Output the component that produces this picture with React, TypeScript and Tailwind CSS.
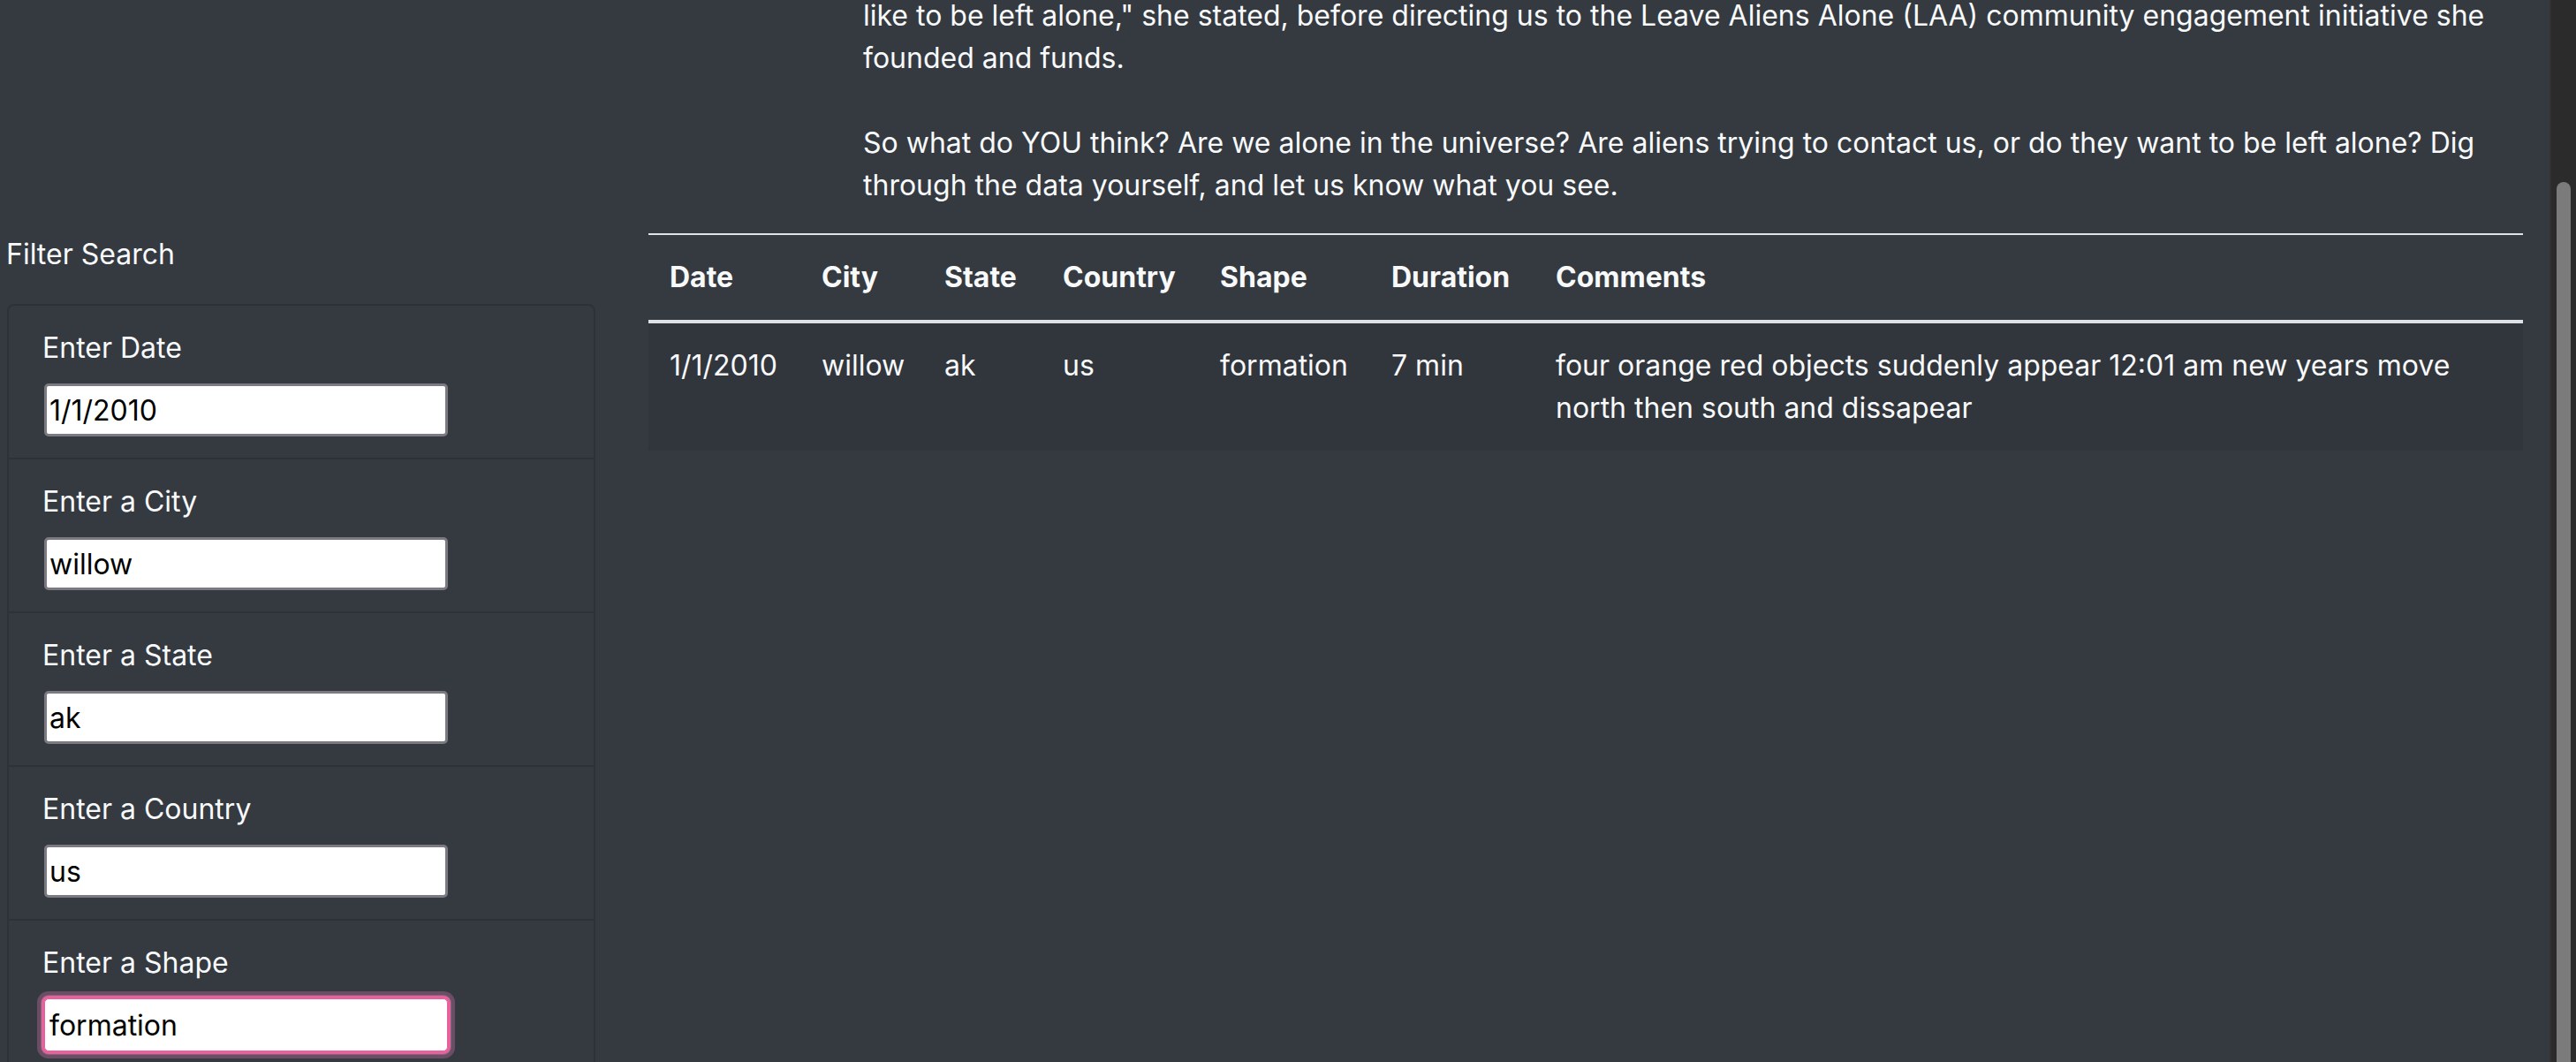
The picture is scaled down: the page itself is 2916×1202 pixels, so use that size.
import React from "react";

const fields = [
  { label: "Enter Date", value: "1/1/2010" },
  { label: "Enter a City", value: "willow" },
  { label: "Enter a State", value: "ak" },
  { label: "Enter a Country", value: "us" },
  { label: "Enter a Shape", value: "formation", focused: true },
];

export default function App() {
  return (
    <div className="flex h-[1202px] w-full overflow-hidden bg-[#343a40] text-[#f8f9fa] font-['Inter','Liberation_Sans',sans-serif] text-[32px] leading-[48px]">
      <div className="flex flex-1 flex-col overflow-hidden">
        {/* intro paragraph (scrolled) */}
        <p className="-mt-[6px] mb-[30px] pl-[977px] pr-[30px] whitespace-nowrap">
          like to be left alone," she stated, before directing us to the Leave Aliens Alone (LAA) community engagement initiative she
          <br />
          founded and funds.
          <br />
          <br />
          So what do YOU think? Are we alone in the universe? Are aliens trying to contact us, or do they want to be left alone? Dig
          <br />
          through the data yourself, and let us know what you see.
        </p>

        <div className="flex">
          {/* filter column */}
          <div className="w-[704px] shrink-0">
            <div className="pl-[7px] mb-[32px]">Filter Search</div>
            <div className="ml-[8px] w-[666px] rounded-[8px] border-2 border-[#2d3237]">
              {fields.map((f, i) => (
                <div
                  key={f.label}
                  className={
                    i < fields.length - 1
                      ? "pl-[38px] pr-[40px] py-[24px] border-b-2 border-[#2d3237]"
                      : "pl-[38px] pr-[40px] py-[24px]"
                  }
                >
                  <label className="block mb-[16px]">{f.label}</label>
                  <input
                    readOnly
                    value={f.value}
                    className={
                      f.focused
                        ? "block ml-[2px] w-[457px] h-[60px] rounded-[5px] border-[1px] border-[#e8609c] bg-white px-[5px] text-[32px] leading-[48px] text-black outline-none shadow-[0_0_0_3px_#e8609c,0_0_0_4px_#7a6a78,0_0_0_8px_#6b4d66] font-['Inter','Liberation_Sans',sans-serif]"
                        : "block ml-[2px] w-[457px] h-[60px] rounded-[5px] border-[3px] border-[#7b7982] bg-white px-[3px] text-[32px] leading-[48px] text-black outline-none font-['Inter','Liberation_Sans',sans-serif]"
                    }
                  />
                </div>
              ))}
            </div>
          </div>

          {/* table column */}
          <div className="w-[2182px] shrink-0 px-[30px]">
            <table className="w-full table-fixed border-collapse text-left">
              <thead>
                <tr>
                  <th className="w-[172px] border-t-2 border-b-4 border-[#dee2e6] p-[24px] font-bold">Date</th>
                  <th className="w-[139px] border-t-2 border-b-4 border-[#dee2e6] p-[24px] font-bold">City</th>
                  <th className="w-[134px] border-t-2 border-b-4 border-[#dee2e6] p-[24px] font-bold">State</th>
                  <th className="w-[178px] border-t-2 border-b-4 border-[#dee2e6] p-[24px] font-bold">Country</th>
                  <th className="w-[194px] border-t-2 border-b-4 border-[#dee2e6] p-[24px] font-bold">Shape</th>
                  <th className="w-[186px] border-t-2 border-b-4 border-[#dee2e6] p-[24px] font-bold">Duration</th>
                  <th className="border-t-2 border-b-4 border-[#dee2e6] p-[24px] font-bold">Comments</th>
                </tr>
              </thead>
              <tbody>
                <tr className="bg-[#31363c]">
                  <td className="p-[24px] align-top">1/1/2010</td>
                  <td className="p-[24px] align-top">willow</td>
                  <td className="p-[24px] align-top">ak</td>
                  <td className="p-[24px] align-top">us</td>
                  <td className="p-[24px] align-top">formation</td>
                  <td className="p-[24px] align-top">7 min</td>
                  <td className="p-[24px] align-top whitespace-nowrap">
                    four orange red objects suddenly appear 12:01 am new years move
                    <br />
                    north then south and dissapear
                  </td>
                </tr>
              </tbody>
            </table>
          </div>
        </div>
      </div>

      {/* scrollbar */}
      <div className="flex w-[30px] shrink-0 border-l-2 border-[#323232] bg-[#2b2b2b] pl-[6px] pt-[206px]">
        <div className="w-[16px] h-full rounded-t-full bg-[#7b7b7b]" />
      </div>
    </div>
  );
}
